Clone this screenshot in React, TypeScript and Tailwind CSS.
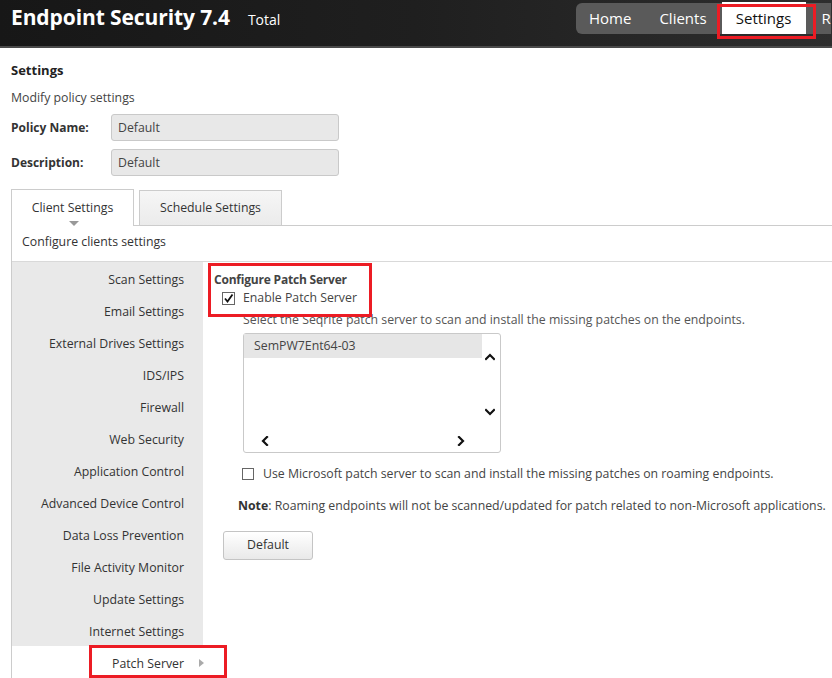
import React from "react";

const sideItems = [
  "Scan Settings",
  "Email Settings",
  "External Drives Settings",
  "IDS/IPS",
  "Firewall",
  "Web Security",
  "Application Control",
  "Advanced Device Control",
  "Data Loss Prevention",
  "File Activity Monitor",
  "Update Settings",
  "Internet Settings",
];

function Chevron({ dir }: { dir: "up" | "down" | "left" | "right" }) {
  const d =
    dir === "up"
      ? "M1 7 L5 3 L9 7"
      : dir === "down"
      ? "M1 3 L5 7 L9 3"
      : dir === "left"
      ? "M7 1 L3 5 L7 9"
      : "M3 1 L7 5 L3 9";
  return (
    <svg width="10" height="10" viewBox="0 0 10 10">
      <path d={d} fill="none" stroke="#111" strokeWidth="2.2" strokeLinecap="square" />
    </svg>
  );
}

export default function App() {
  return (
    <div className="relative w-[832px] h-[678px] overflow-hidden bg-white font-['Open_Sans',sans-serif] text-[#333]">
      {/* Header */}
      <div className="flex h-[48px] bg-linear-to-r from-[#171717] via-[#1f1f1f] to-[#2e2e2e] border-b-2 border-[#4a4a4a]">
        <div className="w-[576px] shrink-0 flex items-baseline pl-[11px] pt-[3px]">
          <span className="text-[21px] font-bold text-white leading-[28px] tracking-[-0.1px]">
            Endpoint Security 7.4
          </span>
          <span className="ml-[18px] text-[14px] text-white">Total</span>
        </div>
        <div className="shrink-0 mt-[3px] h-[31px] bg-[#5a5a5a] rounded-l-[6px] flex items-stretch text-[15px] text-white">
          <div className="pl-[13px] pr-[14px] flex items-center pb-[1px]">Home</div>
          <div className="px-[14px] flex items-center pb-[1px]">Clients</div>
          <div className="ml-[1px] -mt-[1px] w-[84px] bg-white text-[#111] flex items-center justify-center">
            Settings
          </div>
          <div className="pl-[16px] flex items-center pb-[1px]">R</div>
        </div>
      </div>

      {/* Body */}
      <div className="pl-[11px] pt-[12px]">
        <div className="text-[13px] font-bold leading-[20px] text-[#222]">Settings</div>
        <div className="mt-[8px] text-[12.3px] leading-[20px] text-[#444]">Modify policy settings</div>

        <div className="mt-[6px] flex items-center">
          <div className="w-[100px] text-[12px] font-bold text-[#333]">Policy Name:</div>
          <div className="w-[228px] h-[27px] bg-[#e8e8e8] border border-[#c9c9c9] rounded-[3px] flex items-center pl-[6px] pt-[1px] text-[12.3px] text-[#444]">
            Default
          </div>
        </div>
        <div className="mt-[8px] flex items-center">
          <div className="w-[100px] text-[12px] font-bold text-[#333]">Description:</div>
          <div className="w-[228px] h-[27px] bg-[#e8e8e8] border border-[#c9c9c9] rounded-[3px] flex items-center pl-[6px] pt-[1px] text-[12.3px] text-[#444]">
            Default
          </div>
        </div>

        {/* Tabs */}
        <div className="mt-[13px] flex items-end">
          <div className="relative w-[123px] h-[37px] bg-white border-t border-l border-r border-[#cccccc] flex items-start justify-center pt-[9px] text-[12.3px] text-[#333]">
            Client Settings
            <div className="absolute left-[57px] top-[31px] w-0 h-0 border-l-[5px] border-r-[5px] border-t-[5px] border-l-transparent border-r-transparent border-t-[#999]" />
          </div>
          <div className="flex-1 border-b border-[#cccccc] flex items-end pl-[5px]">
            <div className="w-[143px] h-[35px] bg-linear-to-b from-[#f6f6f6] to-[#ebebeb] border-t border-l border-r border-[#cccccc] flex items-center justify-center text-[12.3px] text-[#333]">
              Schedule Settings
            </div>
          </div>
        </div>

        {/* Panel */}
        <div className="border-l border-[#cccccc]">
          <div className="h-[36px] border-b border-[#d9d9d9] flex items-center pl-[10px] pb-[2px] text-[12.3px] text-[#333]">
            Configure clients settings
          </div>
          <div className="flex">
            {/* Sidebar */}
            <div className="w-[191px] shrink-0 flex flex-col">
              {sideItems.map((s) => (
                <div
                  key={s}
                  className="h-[32px] bg-[#e9e9e9] flex items-center justify-end pr-[19px] pt-[5px] text-[12.3px] text-[#333]"
                >
                  {s}
                </div>
              ))}
              <div className="relative h-[32px] bg-white flex items-center justify-end pr-[19px] pt-[5px] text-[12.3px] text-[#333]">
                Patch Server
                <div className="absolute left-[187px] top-[13px] w-0 h-0 border-t-[4px] border-b-[4px] border-l-[5px] border-t-transparent border-b-transparent border-l-[#aaa]" />
              </div>
            </div>

            {/* Content */}
            <div className="flex-1 pl-[11px] pt-[9px] text-[12.3px] text-[#444]">
              <div className="text-[12px] font-bold leading-[18px] tracking-[-0.2px] text-[#444]">Configure Patch Server</div>
              <div className="h-[18px] flex items-center pl-[8px]">
                <div className="w-[13px] h-[13px] border border-[#666] bg-white flex items-center justify-center">
                  <svg width="11" height="11" viewBox="0 0 11 11">
                    <path d="M2 5.5 L4.5 8.5 L9.5 1.5" fill="none" stroke="#111" strokeWidth="1.8" />
                  </svg>
                </div>
                <span className="ml-[8px] text-[#444]">Enable Patch Server</span>
              </div>
              <div className="mt-[4px] ml-[29px] leading-[18px] text-[#555]">
                Select the Seqrite patch server to scan and install the missing patches on the endpoints.
              </div>

              <div className="mt-[4px] ml-[29px] w-[258px] h-[120px] border border-[#c9c9c9] rounded-[3px] relative">
                <div className="w-[238px] h-[24px] bg-[#e6e6e6] flex items-center pl-[10px] text-[#444]">
                  SemPW7Ent64-03
                </div>
                <div className="absolute left-[241px] top-[18px]">
                  <Chevron dir="up" />
                </div>
                <div className="absolute left-[241px] top-[73px]">
                  <Chevron dir="down" />
                </div>
                <div className="absolute left-[16px] top-[102px]">
                  <Chevron dir="left" />
                </div>
                <div className="absolute left-[212px] top-[102px]">
                  <Chevron dir="right" />
                </div>
              </div>

              <div className="mt-[12px] ml-[28px] h-[18px] flex items-center">
                <div className="w-[12px] h-[12px] border border-[#666] bg-white" />
                <span className="ml-[9px] text-[#444]">
                  Use Microsoft patch server to scan and install the missing patches on roaming endpoints.
                </span>
              </div>

              <div className="mt-[14px] ml-[24px] leading-[18px] whitespace-nowrap text-[#444]">
                <span className="font-bold text-[#333]">Note</span>: Roaming endpoints will not be scanned/updated for patch related to non-Microsoft applications.
              </div>

              <div className="mt-[16px] ml-[9px] w-[90px] h-[29px] border border-[#c4c4c4] rounded-[3px] bg-linear-to-b from-white to-[#e9e9e9] flex items-center justify-center text-[#333]">
                Default
              </div>
            </div>
          </div>
        </div>
      </div>

      {/* Red highlight boxes */}
      <div className="absolute left-[717px] top-[4px] w-[99px] h-[35px] border-[3px] border-[#ec1c24]" />
      <div className="absolute left-[208px] top-[263px] w-[164px] h-[54px] border-[3px] border-[#ec1c24]" />
      <div className="absolute left-[89px] top-[645px] w-[138px] h-[33px] border-[3px] border-[#ec1c24]" />
    </div>
  );
}
